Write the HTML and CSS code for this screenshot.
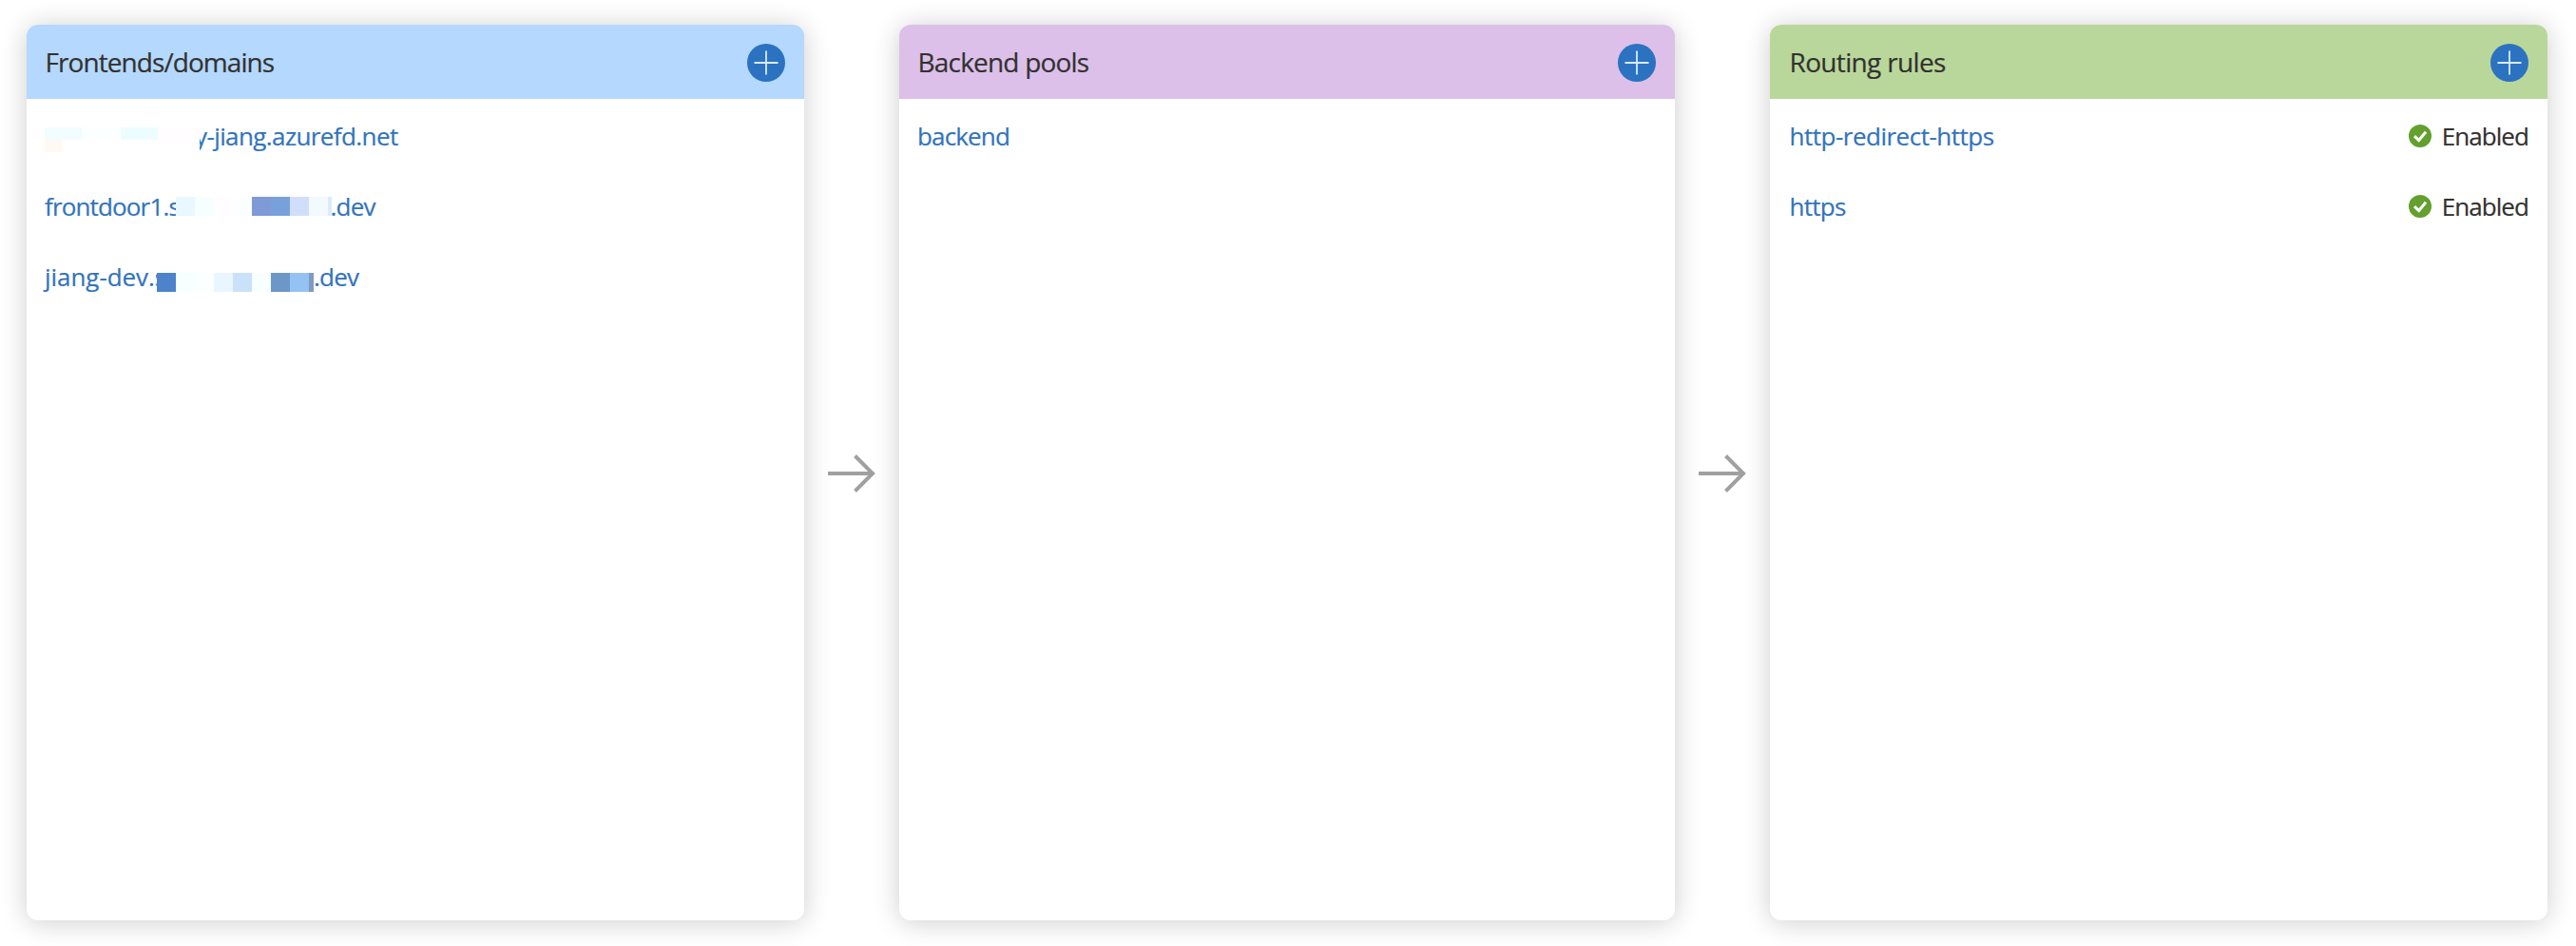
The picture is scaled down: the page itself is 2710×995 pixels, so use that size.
FILE: index.html
```html
<!DOCTYPE html>
<html lang="en">
<head>
<meta charset="utf-8">
<title>Front Door designer</title>
<link rel="stylesheet" href="styles.css">
</head>
<body>
<svg class="defs" width="0" height="0" aria-hidden="true">
  <symbol id="plus" viewBox="0 0 40 40"><circle cx="20" cy="20" r="20" fill="#2b72c1"/><path d="M7.5 20h25M20 7.5v25" stroke="#d9ecfd" stroke-width="1.8" fill="none"/></symbol>
  <symbol id="arrow" viewBox="0 0 50 40"><path d="M0 20h47M28.5 1.5L47 20L28.5 38.5" fill="none" stroke="#a0a0a1" stroke-width="4"/></symbol>
  <symbol id="check" viewBox="0 0 24 24"><circle cx="12" cy="12" r="12" fill="#63a02e"/><path d="M6 12.2l4.7 4.3L18 7.7" fill="none" stroke="#fff" stroke-width="3"/></symbol>
</svg>
<main class="designer">
  <section class="card">
    <header class="head blue"><h2 class="t-front">Frontends/domains</h2><svg class="add"><use href="#plus"/></svg></header>
    <div class="row"><a class="link"><span class="mosaic first"><i class="m1"></i><i class="m2"></i><i class="m3"></i><i class="m4"></i><i class="m5"></i></span><span class="t-azure">y-jiang.azurefd.net</span></a></div>
    <div class="row"><a class="link"><span class="cut-s t-fd">frontdoor1.s</span><span class="mosaic second"><i class="c1"></i><i class="c2"></i><i class="c3"></i><i class="c4"></i><i class="c5"></i><i class="c6"></i><i class="c7"></i><i class="c8"></i><i class="c9"></i></span><span class="t-dev shift">.dev</span></a></div>
    <div class="row"><a class="link"><span class="cut-j t-jd">jiang-dev.s</span><span class="mosaic third"><i class="d1"></i><i class="d2"></i><i class="d3"></i><i class="d4"></i><i class="d5"></i><i class="d6"></i><i class="d7"></i><i class="d8"></i><i class="d9"></i></span><span class="t-dev">.dev</span></a></div>
  </section>
  <div class="flow"><svg class="arrow"><use href="#arrow"/></svg></div>
  <section class="card middle">
    <header class="head purple"><h2 class="t-pools">Backend pools</h2><svg class="add"><use href="#plus"/></svg></header>
    <div class="row"><a class="link t-backend">backend</a></div>
  </section>
  <div class="flow"><svg class="arrow"><use href="#arrow"/></svg></div>
  <section class="card rules">
    <header class="head green"><h2 class="t-rules">Routing rules</h2><svg class="add"><use href="#plus"/></svg></header>
    <div class="row"><a class="link t-redirect">http-redirect-https</a><span class="status"><svg class="check"><use href="#check"/></svg><span class="state">Enabled</span></span></div>
    <div class="row"><a class="link t-https">https</a><span class="status"><svg class="check"><use href="#check"/></svg><span class="state">Enabled</span></span></div>
  </section>
</main>
</body>
</html>
```

FILE: styles.css
```css
* { box-sizing: border-box; }
body { margin: 0; background: #fff; color: #323130; font-family: "Open Sans", "Noto Sans", sans-serif; font-size: 26px; overflow: hidden; -webkit-text-stroke: .2px currentColor; }
.defs { position: absolute; }
.designer { display: flex; height: 995px; padding: 26px 30px 27px 28px; }
.card { width: 818px; flex: none; border-radius: 12px; background: #fff; box-shadow: 0 2px 28px rgba(0, 0, 0, .2); overflow: hidden; }
.middle { width: 816px; }
.head { display: flex; align-items: center; justify-content: space-between; height: 78px; padding: 2px 20px 0 19.5px; }
.rules .head, .rules .row { padding-left: 20.5px; }
.blue { background: #b4d8fe; }
.purple { background: #dcc0e9; }
.green { background: #b9d79a; }
h2 { margin: 0; font-size: 28px; line-height: 40px; font-weight: 400; white-space: nowrap; padding-bottom: 2px; }
.add { width: 40px; height: 40px; }
.row { display: flex; align-items: center; justify-content: space-between; height: 74px; padding: 4px 21px 0 19px; }
.link { display: flex; align-items: center; color: #3273bd; line-height: 36px; white-space: nowrap; }
.flow { display: flex; flex: none; width: 100px; align-items: center; justify-content: center; }
.arrow { width: 50px; height: 40px; margin-top: 2px; }
.status { display: flex; align-items: center; gap: 11px; line-height: 36px; }
.check { width: 24px; height: 24px; }
.state { letter-spacing: -.95px; margin-right: -.95px; }

.t-front { letter-spacing: -.93px; }
.t-pools { letter-spacing: -.8px; }
.t-rules { letter-spacing: -.65px; }
.t-backend { letter-spacing: -.85px; }
.t-redirect { letter-spacing: -.5px; }
.t-https { letter-spacing: -.75px; }
.t-azure { letter-spacing: -.6px; margin-left: -5px; }
.t-fd { letter-spacing: -.85px; }
.t-jd { letter-spacing: -.05px; }
.t-dev { letter-spacing: -.8px; }
.shift { margin-left: -1.5px; }

.cut-s { width: 138px; }
.cut-j { width: 118px; }
.mosaic { display: grid; flex: none; position: relative; z-index: 1; background: #fff; }
.first { width: 163px; height: 26px; margin-top: 8px; grid-template-columns: 39px 41px 39px 44px; grid-template-rows: 13px 13px; }
.m1 { background: #f1fdff; }
.m2 { background: #fcffff; }
.m3 { background: #edfdff; }
.m4 { background: #fffdff; }
.m5 { width: 18px; background: #fff9f4; }
.second { width: 164px; height: 20px; grid-template-columns: repeat(8, 20px) 4px; }
.third { width: 165px; height: 20px; margin-top: 12px; grid-template-columns: repeat(8, 20px) 5px; }
.c1 { background: #e9f7ff; } .c2 { background: #f5ffff; } .c3 { background: #fffdff; }
.c4 { background: #fbffff; } .c5 { background: #7f9ad7; } .c6 { background: #78a1dc; }
.c7 { background: #cfdff9; } .c8 { background: #f2f9ff; } .c9 { background: #dbebfb; }
.d1 { background: #4c83ca; } .d2 { background: #f7ffff; } .d3 { background: #fcffff; }
.d4 { background: #eaf6ff; } .d5 { background: #c9e2fa; } .d6 { background: #f8ffff; }
.d7 { background: #6d97c8; } .d8 { background: #93c2f3; } .d9 { background: #7f9cba; }
```
